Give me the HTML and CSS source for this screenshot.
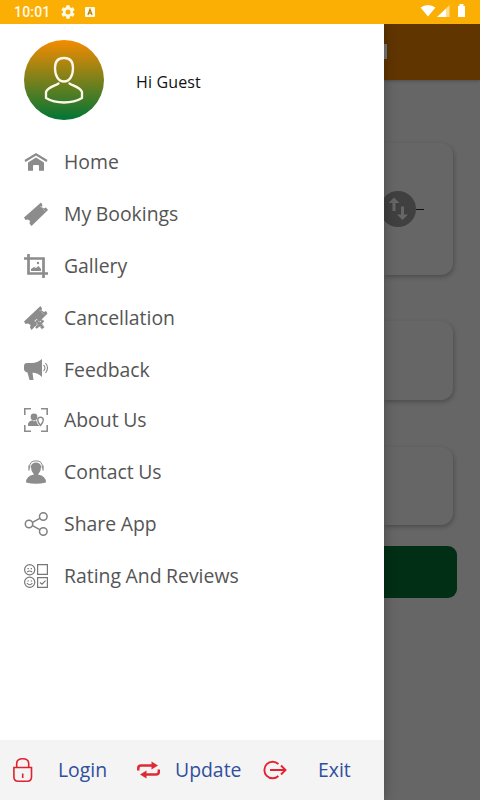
FILE: index.html
```html
<!DOCTYPE html>
<html lang="en">
<head>
<meta charset="utf-8">
<title>Menu</title>
<link rel="stylesheet" href="styles.css">
</head>
<body>
<header class="status">
  <span class="clock">10:01</span>
  <svg class="gear" width="14" height="14" viewBox="2 2 20 20"><path fill="#fffbe9" d="M19.14 12.94c.04-.3.06-.61.06-.94s-.02-.64-.07-.94l2.03-1.58a.49.49 0 0 0 .12-.61l-1.92-3.32a.49.49 0 0 0-.59-.22l-2.39.96a7 7 0 0 0-1.62-.94l-.36-2.54A.48.48 0 0 0 13.920 2.400h-3.840a.48.48 0 0 0-.47.41l-.36 2.540a7 7 0 0 0-1.620.94l-2.390-.96a.49.49 0 0 0-.59.22L2.740 8.870a.48.48 0 0 0 .12.61l2.030 1.580a6 6 0 0 0 0 1.880l-2.030 1.580a.49.49 0 0 0-.12.61l1.920 3.320c.12.22.37.29.59.22l2.390-.96c.5.38 1.030.7 1.620.94l.36 2.540c.05.24.24.41.48.41h3.840c.24 0 .44-.17.47-.41l.36-2.540a7 7 0 0 0 1.620-.94l2.390.96c.22.08.47 0 .59-.22l1.920-3.320a.48.48 0 0 0-.12-.61zM12 15.600a3.600 3.600 0 1 1 0-7.200 3.600 3.600 0 0 1 0 7.200z"/></svg>
  <svg class="keyboard" width="10" height="10" viewBox="0 0 10 10"><rect width="10" height="10" rx="1" fill="#fffbe9"/><path d="M2.900 8 5 2.300 7.100 8M3.700 6.200h2.600" fill="none" stroke="#b87c00" stroke-width="1.200"/></svg>
  <svg class="signals" width="46" height="14" viewBox="0 0 46 14"><path fill="#fff" d="M.5 3.500Q8 -1.500 15.500 3.500L8 12.500z"/><path fill="#fff" d="M17 13 26 4.500V13z"/><path fill="#ffdc91" d="M26 4.500 29.500 1v12H26z"/><path fill="#fff" d="M38 2h1.500V0h4v2H45v11h-7z"/></svg>
</header>
<main class="screen">
  <aside class="drawer">
    <div class="profile">
      <div class="avatar">
        <svg width="40" height="48" viewBox="0 0 40 48"><g fill="none" stroke="#fff8e8" stroke-width="2.300" stroke-linecap="round" stroke-linejoin="round"><path d="M20 2C14 2 11 6 11 12C11 20 14.500 25.500 20 25.500S29 20 29 12C29 6 26 2 20 2z"/><path d="M14.500 27.500C11 30 4 31 2 36V42C7 45 14 46.500 20 46.500S33 45 38 42V36C36 31 29 30 25.500 27.500"/></g></svg>
      </div>
      <span class="hello">Hi Guest</span>
    </div>
    <nav class="menu">
      <a class="item"><svg class="icon" viewBox="0 0 24 24"><path d="M1 11 12 4.200 23 11" fill="none" stroke="#8c8c8c" stroke-width="2.200"/><path fill="#8c8c8c" d="M4 12.500 12 7.500 20 12.500v8.300h-5V16q0-1-1-1h-4q-1 0-1 1v4.800H4z"/></svg>Home</a>
      <a class="item"><svg class="icon" viewBox="0 0 24 24"><path fill="#8c8c8c" d="M0 15.500 17 .5 18.500 3 17.500 5 20 6.500 22 5.500 24 8 7.500 24 5.500 21.500 6 19 4 17.500 1.500 18z"/><path stroke="#ddd" stroke-width=".8" stroke-dasharray="1 1" d="m16 4 5 5"/></svg>My Bookings</a>
      <a class="item"><svg class="icon" viewBox="0 0 24 24"><path d="M4.500 0v19.500H24M0 4.500h19.500V24" fill="none" stroke="#8c8c8c" stroke-width="2.700"/><path fill="#8c8c8c" d="M7 17v-2l3-2 2 1 2.500-2 2.500 3v2z"/><circle cx="14" cy="9" r="1.200" fill="#8c8c8c"/></svg>Gallery</a>
      <a class="item"><svg class="icon" viewBox="0 0 24 24"><path fill="#8c8c8c" d="M0 15.500 16.500 0 18 2.500 17.500 4.500 20 6 22 5 23.500 7.500 18 13 20 15 18 17.500 20.500 21 18 23.500 15.500 20.500 13 22.500 11 20.500 7.500 24 6 21.500 6.500 19 4 17.500 1.500 18z"/><path d="m11.500 14 8 8m0-8-8 8" stroke="#fff" stroke-width="3" stroke-dasharray="1.500 1"/><path d="m12 14.500 7.500 7.500m0-7.500-7.500 7.500" stroke="#8c8c8c" stroke-width="2.200"/><path stroke="#eee" stroke-width=".9" stroke-dasharray="1 1.500" d="m15.500 4 5 5"/></svg>Cancellation</a>
      <a class="item"><svg class="icon" viewBox="0 0 24 24"><path fill="#8c8c8c" d="M0 8Q0 5 3 5H8Q13 5 18 1V19Q13 14.500 8.500 14.800L9.500 22H5.500L3.500 14.500Q0 13.500 0 11z"/><path d="M19.500 7q3 3 0 6M21.500 5q4 5 0 10" fill="none" stroke="#8c8c8c" stroke-width="1.100"/></svg>Feedback</a>
      <a class="item item-about"><svg class="icon" viewBox="0 0 24 24"><path d="M.8 7V.8H7M17 .8h6.200V7M23.200 17v6.200H17M7 23.200H.8V17" fill="none" stroke="#8c8c8c" stroke-width="1.600"/><g fill="#8c8c8c"><circle cx="10" cy="9" r="3.400"/><path d="M4 17.500V15.500Q5 12.700 8.500 12.200L10 13.500l2-1.300Q13 16 15.500 18H4z"/></g><path d="M16.500 17.500Q13.700 14 13.700 12a2.800 2.800 0 0 1 5.600 0Q19.300 14 16.500 17.500z" fill="#fff" stroke="#8c8c8c" stroke-width="1.400"/></svg>About Us</a>
      <a class="item"><svg class="icon" viewBox="0 0 24 24"><path fill="#8c8c8c" d="M2 22.500Q2 16 10 14.500Q6.500 11 7 6Q8 2.500 12 2.500T17 6Q17.500 11 14 14.500Q22 16 22 22.500Q12 25 2 22.500z"/><path d="M5.700 8Q5 .8 12 .8T18.300 8" fill="none" stroke="#8c8c8c"/><path d="M5 5.500v5M19 5.500v5" stroke="#8c8c8c" stroke-width="1.300"/></svg>Contact Us</a>
      <a class="item"><svg class="icon" viewBox="0 0 24 24"><g fill="none" stroke="#808080" stroke-width="1.500"><circle cx="5" cy="12" r="3.700"/><circle cx="19.300" cy="4.500" r="3.800"/><circle cx="19.300" cy="19.500" r="3.800"/><path d="m8.500 10.300 7.300-4M8.500 13.700l7.300 4"/></g></svg>Share App</a>
      <a class="item"><svg class="icon" viewBox="0 0 24 24"><g fill="none" stroke="#777" stroke-width="1.200"><circle cx="5.700" cy="5.700" r="5.100"/><circle cx="5.700" cy="18.300" r="5.100"/><path d="M13.600.6h9.800v9.800h-9.800zM13.600 13.600h9.800v9.800h-9.800zM3.300 8q2.400-2 4.800 0M3 19q2.700 3.500 5.400 0M16 18.500l2 1.700 3.500-3.500"/></g><path d="M3.500 4.700h1.300M6.700 4.700H8M3.500 17h1.300M6.700 17H8" stroke="#777" stroke-width="1.200"/></svg>Rating And Reviews</a>
    </nav>
    <footer class="actions">
      <a class="action login"><svg width="24" height="24" viewBox="0 0 24 24"><g fill="none" stroke="#e0222e" stroke-width="1.600"><path d="M3.900 9.500h17.600v9.500q0 4.200-4.200 4.200H8.100q-4.200 0-4.200-4.200zM6.700 9.500V5.500Q6.700.8 12.700.8t6 4.700v4"/><path d="M12.700 15.500v4.500"/></g></svg><span>Login</span></a>
      <a class="action update"><svg width="24" height="24" viewBox="0 0 24 24"><g fill="none" stroke="#dc2b35" stroke-width="2.500"><path d="M2.300 12.500V10Q2.300 7.500 5 7.500h12M22.800 11.500V14Q22.800 16.500 20 16.500H8"/></g><path fill="#dc2b35" d="m15.500 3.500 6.500 4-6.500 4zM10.500 12.500 4 16.500l6.500 4z"/></svg><span>Update</span></a>
      <a class="action exit"><svg width="24" height="24" viewBox="0 0 24 24"><g fill="none" stroke="#e62231" stroke-width="1.900"><path d="M15.400 6A8.300 8.300 0 1 0 15.400 18M7 12h16M18 7.500 22.500 12 18 16.500"/></g></svg><span>Exit</span></a>
    </footer>
  </aside>
  <section class="page">
    <div class="topbar"><i class="letter"></i></div>
    <div class="card route"><svg width="40" height="36" viewBox="0 0 40 36"><circle cx="14" cy="18" r="18" fill="#404040"/><path fill="#666" d="M4.500 12 10 6.500l5.500 5.500h-4V20h-3v-8zM13 23.500h4V15.500h3v8h4L18.500 29z"/><path d="M32 18.500h8" stroke="#111"/></svg></div>
    <div class="card date"></div>
    <div class="card seats"></div>
    <div class="search"></div>
  </section>
</main>
</body>
</html>
```
FILE: styles.css
```css
* { box-sizing: border-box; }
body {
  margin: 0;
  width: 480px;
  height: 800px;
  display: flex;
  flex-direction: column;
  overflow: hidden;
  font-family: "Open Sans", "Noto Sans", sans-serif;
  background: #fff;
}
svg { display: block; flex: none; }
.status {
  height: 24px;
  display: flex;
  align-items: center;
  padding: 0 14px;
  background: #fbae03;
  color: #fffbe9;
}
.clock { width: 47px; font: 500 14px/24px Roboto, sans-serif; letter-spacing: .2px; }
.keyboard { margin-left: 10px; }
.signals { margin-left: auto; margin-bottom: 2px; }
.screen { flex: 1; display: grid; grid-template-columns: 384px 96px; }
.drawer {
  display: flex;
  flex-direction: column;
  background: #fff;
  z-index: 1;
  box-shadow: 0 0 12px rgba(0, 0, 0, .3);
  clip-path: inset(0 -20px 0 0);
}
.profile { height: 112px; padding: 16px 24px; display: flex; gap: 32px; }
.avatar {
  width: 80px;
  height: 80px;
  padding: 16px 20px;
  border-radius: 50%;
  background: linear-gradient(#f58c00, #007536);
}
.hello { font-size: 16px; line-height: 22px; padding-top: 31px; letter-spacing: .15px; color: #111; }
.menu { flex: 1; display: flex; flex-direction: column; }
.item {
  height: 52px;
  padding-left: 24px;
  display: flex;
  align-items: center;
  gap: 16px;
  font-size: 19.4px;
  line-height: 26px;
  word-spacing: -.5px;
  color: #555;
}
.item-about { margin-top: -2px; }
.icon { width: 24px; height: 24px; }
.actions { height: 60px; display: flex; align-items: center; background: #f4f4f4; color: #2f4f9d; font-size: 19.4px; line-height: 26px; }
.action { display: flex; align-items: center; }
.login { width: 136px; padding-left: 10px; gap: 24px; }
.update { width: 127px; gap: 15px; }
.exit { gap: 31px; }
.page { background: #666; overflow: hidden; }
.topbar { height: 56px; padding-top: 20px; background: #613500; box-shadow: 0 1px 3px rgba(0, 0, 0, .25); }
.letter { display: block; width: 3px; height: 15px; background: #777; }
.card {
  width: 69px;
  border-radius: 0 12px 12px 0;
  background: #666;
  box-shadow: 1px 2px 4px rgba(0, 0, 0, .25);
}
.route { height: 132px; margin-top: 63px; padding-top: 48px; }
.date { height: 79px; margin-top: 46px; }
.seats { height: 78px; margin-top: 47px; }
.search { width: 73px; height: 52px; margin-top: 21px; border-radius: 0 9px 9px 0; background: #002f15; }
```
